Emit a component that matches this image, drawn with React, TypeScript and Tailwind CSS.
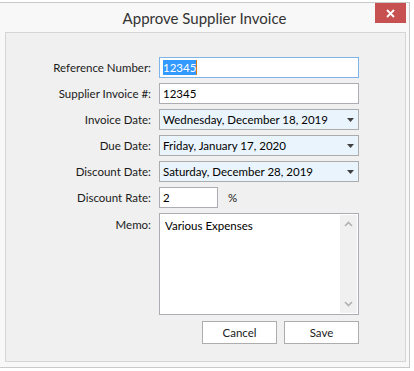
import { FC, ReactNode } from 'react'

const font = { fontFamily: 'Lato, "Noto Sans", sans-serif' }

const Row: FC<{ label: string; children: ReactNode; top?: boolean }> = ({ label, children, top }) => (
	<div className={`flex ${top ? 'items-start' : 'items-center'} gap-[8px]`}>
		<div className={`w-[145px] shrink-0 text-right text-[11.5px] text-[#1a1a1a] ${top ? 'pt-[3px]' : ''}`}>{label}</div>
		{children}
	</div>
)

const DateBox: FC<{ value: string }> = ({ value }) => (
	<div className="flex items-center justify-between w-[200px] h-[21px] border border-[#acacac] bg-[#eaf4fc] pl-[3px] pr-[4px] text-[11.5px] text-black">
		<span>{value}</span>
		<svg width="7" height="4" viewBox="0 0 7 4">
			<path d="M0 0h7L3.5 4z" fill="#404040" />
		</svg>
	</div>
)

const App: FC = () => {
	return (
		<div className="w-[414px] h-[371px] bg-white overflow-hidden" style={font}>
			<div className="mt-[2px] w-[410px] h-[366px] border-t border-r border-b border-[#c9c9c9] bg-[#f8f8f8] flex flex-col">
				<div className="relative h-[29px] flex items-center justify-center shrink-0">
					<span className="text-[15px] text-[#333] pt-[1px]">Approve Supplier Invoice</span>
					<div className="absolute top-0 right-[3px] w-[31px] h-[20px] bg-[#c75050] flex items-center justify-center">
						<svg width="9" height="9" viewBox="0 0 9 9">
							<path d="M1 1l7 7M8 1L1 8" stroke="#fff" strokeWidth="1.8" />
						</svg>
					</div>
				</div>

				<div className="ml-[5px] w-[401px] h-[330px] border border-[#d5d5d5] bg-[#f0f0f0] pt-[24px] flex flex-col gap-[5px]">
					<Row label="Reference Number:">
						<div className="flex items-center w-[200px] h-[21px] border border-[#7eb4ea] bg-white pl-[3px] text-[11.5px]">
							<span className="bg-[#3399ff] text-white leading-[15px]">12345</span>
							<span className="w-[1px] h-[15px] bg-[#d07a20]" />
						</div>
					</Row>
					<Row label="Supplier Invoice #:">
						<div className="flex items-center w-[200px] h-[21px] border border-[#abadb3] bg-white pl-[3px] text-[11.5px] text-black">
							12345
						</div>
					</Row>
					<Row label="Invoice Date:">
						<DateBox value="Wednesday, December 18, 2019" />
					</Row>
					<Row label="Due Date:">
						<DateBox value="Friday, January 17, 2020" />
					</Row>
					<Row label="Discount Date:">
						<DateBox value="Saturday, December 28, 2019" />
					</Row>
					<Row label="Discount Rate:">
						<div className="flex items-center w-[59px] h-[21px] border border-[#abadb3] bg-white pl-[3px] text-[11.5px] text-black">
							2
						</div>
						<span className="ml-[2px] text-[11.5px] text-[#1a1a1a]">%</span>
					</Row>
					<Row label="Memo:" top>
						<div className="flex w-[200px] h-[102px] border border-[#abadb3] bg-white">
							<div className="flex-1 pl-[5px] pt-[3px] text-[11.5px] text-black">Various Expenses</div>
							<div className="w-[17px] mt-[1px] mb-[1px] mr-[1px] bg-[#f0f0f0] flex flex-col justify-between items-center py-[6px]">
								<svg width="9" height="6" viewBox="0 0 9 6">
									<path d="M1 5l3.5-3.5L8 5" stroke="#b0b0b0" strokeWidth="1.6" fill="none" />
								</svg>
								<svg width="9" height="6" viewBox="0 0 9 6">
									<path d="M1 1l3.5 3.5L8 1" stroke="#b0b0b0" strokeWidth="1.6" fill="none" />
								</svg>
							</div>
						</div>
					</Row>
					<div className="flex justify-end gap-[7px] w-[353px] mt-[1px]">
						<button className="w-[75px] h-[23px] border border-[#adadad] bg-white text-[11.5px] text-[#1a1a1a]">
							Cancel
						</button>
						<button className="w-[75px] h-[23px] border border-[#adadad] bg-white text-[11.5px] text-[#1a1a1a]">
							Save
						</button>
					</div>
				</div>
			</div>
		</div>
	)
}

export default App
